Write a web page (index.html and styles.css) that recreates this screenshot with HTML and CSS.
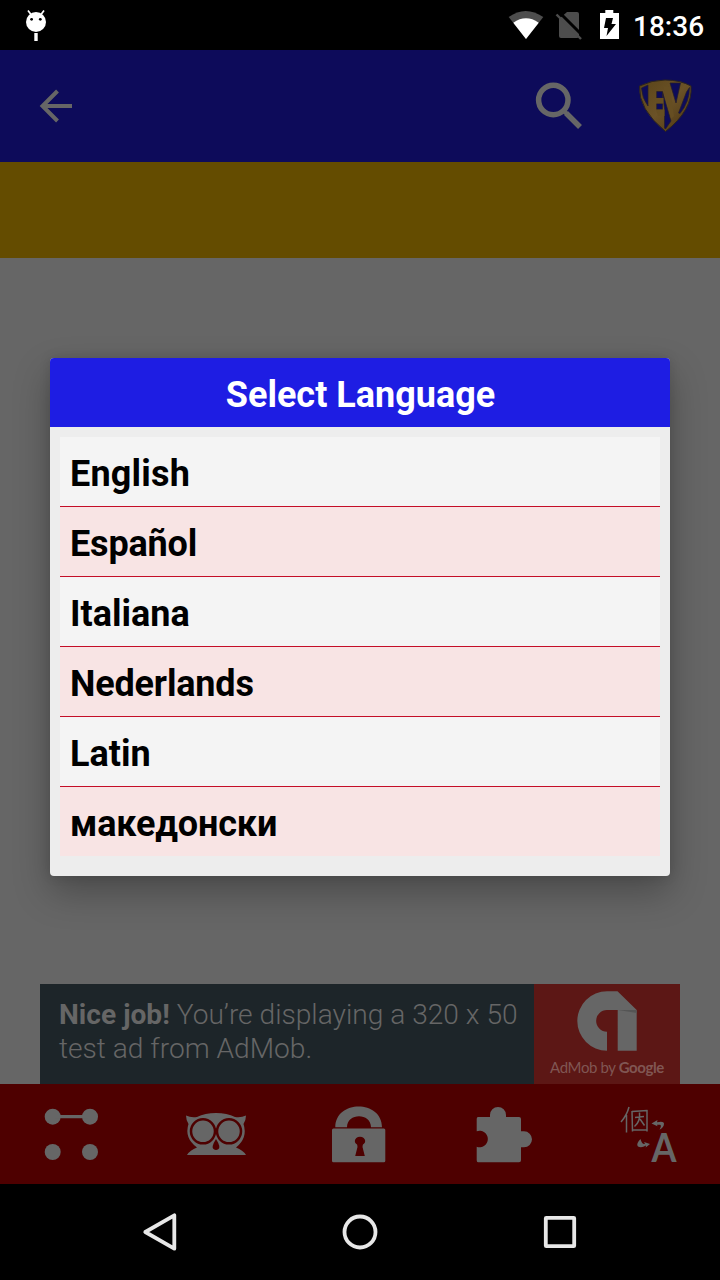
FILE: index.html
```html
<!DOCTYPE html>
<html lang="en">
<head>
<meta charset="utf-8">
<title>Select Language</title>
<link rel="stylesheet" href="styles.css">
</head>
<body>
<div class="screen">
  <header class="status">
    <svg class="debug" width="24" height="34" viewBox="24 8 24 34"><path d="M28 10.500l3 4M44 10.500l-3 4" stroke="#fff" stroke-width="1.700"/><circle cx="36" cy="22" r="10" fill="#fff"/><circle cx="31.600" cy="19.300" r="1.400"/><circle cx="40.300" cy="19.300" r="1.400"/><path d="M34.300 33h3.400v8h-3.400z" fill="#fff"/></svg>
    <svg class="signals" width="114" height="34" viewBox="508 8 114 34"><path d="M508.700 17Q525.500 5 543.300 17L526 39z" fill="#4d4d4d"/><path d="M513.300 22.700Q526 14 538.700 22.700L526 39z" fill="#fff"/><path d="M567 12h10q2 0 2 2v22q0 2-2 2h-16q-2 0-2-2V19z" fill="#4d4d4d"/><path d="M559 12l23.500 23.500" stroke="#000" stroke-width="3"/><path d="M556.500 14.500l24.500 24.500" stroke="#4d4d4d" stroke-width="2.400"/><path d="M600 13h5.300v-3h8v3h5.700v26h-19z" fill="#fff"/><path d="M606 18h7l-1.500 6h4.500l-9.500 12 1.500-8h-4z"/></svg>
    <span class="clock">18:36</span>
  </header>
  <nav class="toolbar">
    <svg width="34" height="34" viewBox="39 89 34 34" fill="none" stroke="#666" stroke-width="4"><path d="M72 106H43M57.500 91L42.500 106l15 15"/></svg>
    <div class="actions">
      <svg width="50" height="50" viewBox="534 80 50 50" fill="none" stroke="#666"><circle cx="553.300" cy="99" r="14.700" stroke-width="5.500"/><path d="M563.500 109.500l3 3" stroke-width="4"/><path d="M566 112l14 14" stroke-width="5.500"/></svg>
      <svg width="54" height="54" viewBox="638 79 54 54">
        <defs><linearGradient id="gold" x1="0" y1="0" x2="1" y2="1"><stop offset="0" stop-color="#5a4419"/><stop offset=".5" stop-color="#6b5227"/><stop offset="1" stop-color="#4b3510"/></linearGradient></defs>
        <path d="M639.500 86Q652 80 665 80Q680 80 691 86Q693 110 665.500 131.500Q638 109 639.500 86z" fill="url(#gold)" stroke="#2c241e" stroke-width="1"/>
        <g fill="#0d0b5a" stroke="#251e28" stroke-width=".7">
          <path d="M641.500 88L648 85V106Q642 98 641.500 88z"/>
          <path d="M656.700 91.500H662.500V98H656.700z"/>
          <path d="M656.700 103.500H662.500V109.500H656.700z"/>
          <path d="M662.500 92L671 121 665.500 129 664.500 128V109z"/>
          <path d="M670 83H680.500L676 103z"/>
          <path d="M689.500 87.500Q689.500 102 680 113.500L678.500 113 686.500 92z"/>
        </g>
        <path d="M656 109.500H664.500V116H658zM656 98H663.500V103.500H656zM663 86L670 87 674 116 671 119z" fill="#664e22"/>
      </svg>
    </div>
  </nav>
  <div class="band"></div>
  <main class="content">
    <section class="ad">
      <p class="ad-copy"><b>Nice job!</b> You’re displaying a 320 x 50<br><span>test ad from AdMob.</span></p>
      <div class="ad-brand">
        <svg width="60" height="60" viewBox="577 991 60 60"><path d="M607 991.300h10.500L636.700 1010v40.700h-19V1010H607a10.700 10.700 0 0 0 0 21.700v19a29.700 29.700 0 0 1 0-59.400z" fill="#666"/><path d="M618 1010h18l1 3z" fill="#555"/></svg>
        <div class="ad-name">AdMob by <b>Google</b></div>
      </div>
    </section>
  </main>
  <footer class="tabs">
    <svg width="56" height="54" viewBox="44 1107 56 54" fill="#666"><circle cx="52.700" cy="1116.700" r="8"/><circle cx="90" cy="1116.700" r="8"/><circle cx="52.700" cy="1152" r="8"/><circle cx="90" cy="1152" r="8"/><path d="M55 1115h33v3.300H55z"/></svg>
    <svg width="62" height="44" viewBox="185 1112 62 44"><path d="M186 1115.500Q191 1118 197 1117Q205 1113 216 1113Q227 1113 235 1117Q241 1118 246 1115.500Q246 1120 243.500 1124Q248 1138 236 1147.500Q243 1150 246 1155H187Q190 1150 197 1147.500Q184 1138 188.500 1124Q186 1120 186 1115.500z" fill="#666"/><g fill="#666" stroke="#4e0000" stroke-width="2.500"><circle cx="203" cy="1131.300" r="12"/><circle cx="229" cy="1131.300" r="12"/></g><path d="M216 1139Q211 1147 213.500 1149Q216 1151 218.500 1149Q221 1147 216 1139z" fill="#4e0000"/></svg>
    <svg width="56" height="58" viewBox="332 1105 56 58"><path d="M335.300 1127.300C335.300 1099.700 382 1099.700 382 1127.300H371C371 1112.700 347 1112.700 347 1127.300z" fill="#666"/><rect x="332" y="1128.500" width="53.300" height="33.700" rx="1.500" fill="#666"/><ellipse cx="360" cy="1141" rx="5.200" ry="4.300" fill="#4e0000"/><path d="M357 1143h6l-.5 4 2.300 9h-9.600l2.300-9z" fill="#4e0000"/></svg>
    <svg width="58" height="57" viewBox="475 1106 58 57"><path d="M478 1117h12v-2a8 8 0 0 1 16 0v2h13q2 0 2 2v12.300h3a8 8 0 0 1 0 16h-3v13q0 2-2 2h-41q-1.300 0-1.300-2v-13.500a8.300 8.300 0 1 0 0-15.600V1119q0-2 1.300-2z" fill="#666"/></svg>
    <svg class="translate" width="72" height="72" viewBox="612 1098 72 72" fill="none" stroke="#666"><path d="M629 1107q-2 8-8 15M626.500 1115v17.500M632 1111l.5 20.500M632 1111.500l15.500-1M647 1110v21.500M632.500 1130h14.500M635 1117.500l9-1M639.500 1112.500q1 9-5 14M640 1119l4.500 6.500" stroke-width="1.500"/><path d="M651.500 1123.500l6-3.500-.5 2.200q7-1.500 7 1.500 0 3.500-4.500 6 2.500-4.500.5-5h-3l.5 1.500zM650 1144l-6-2 1 1.800q-3 1-4.500-4.800-5 5-2.500 7.500 3.500 1.800 8-1l-.3 2z" fill="#666" stroke="none"/><text x="651.5" y="1161.500" textLength="25" lengthAdjust="spacingAndGlyphs">A</text></svg>
  </footer>
  <footer class="system">
    <svg width="440" height="44" viewBox="140 1210 440 44" fill="none" stroke="#e8e8e8" stroke-width="3.800" stroke-linejoin="round"><path d="M145.300 1232L174.300 1215.300v33.400z"/><circle cx="360" cy="1232" r="15.500"/><rect x="545.800" y="1217.800" width="28.400" height="28.400" rx=".5"/></svg>
  </footer>
  <section class="dialog">
    <h1>Select Language</h1>
    <ul class="languages">
      <li class="wide">English</li>
      <li class="tight">Español</li>
      <li>Italiana</li>
      <li class="tight">Nederlands</li>
      <li>Latin</li>
      <li class="tight">македонски</li>
    </ul>
  </section>
</div>
</body>
</html>
```
FILE: styles.css
```css
* { box-sizing: border-box; }
body { margin: 0; font-family: Roboto, "Noto Sans", sans-serif; }
svg { display: block; flex: none; overflow: visible; }
.screen { position: relative; width: 720px; height: 1280px; display: flex; flex-direction: column; overflow: hidden; background: #666; }
.status { height: 50px; background: #000; color: #fff; display: flex; align-items: center; padding: 0 16px 0 24px; }
.signals { margin-left: auto; }
.clock { width: 71px; margin-left: 11px; font-size: 28px; font-weight: 500; line-height: 34px; white-space: nowrap; padding-top: 3px; }
.toolbar { height: 112px; background: #0d0b5a; display: flex; align-items: center; justify-content: space-between; padding: 0 28px 0 39px; }
.actions { display: flex; align-items: center; gap: 54px; }
.band { height: 96px; background: #644c00; }
.content { flex: 1; display: flex; align-items: flex-end; justify-content: center; }
.ad { width: 640px; height: 100px; display: flex; background: #1d2529; color: #666; }
.ad-copy { width: 494px; margin: 0; padding: 14px 0 0 19px; font-size: 28.150px; line-height: 33.500px; font-weight: 300; white-space: nowrap; }
.ad-copy b { font-weight: 700; }
.ad-brand { flex: 1; background: #5c1715; display: flex; flex-direction: column; align-items: center; padding-top: 7px; }
.ad-name { font: 15px/18px Lato, sans-serif; letter-spacing: -.4px; margin-top: 7px; color: #805653; white-space: nowrap; }
.ad-name b { font-weight: 700; }
.tabs { height: 100px; background: #4e0000; display: grid; grid-template-columns: repeat(5, 144px); align-items: center; justify-items: center; }
.translate text { font: 700 40px Lato, sans-serif; fill: #666; stroke: none; }
.system { height: 96px; background: #000; display: flex; align-items: center; justify-content: center; }
.dialog { position: absolute; left: 50px; top: 358px; width: 620px; height: 518px; background: #ededed; border-radius: 4px; overflow: hidden; box-shadow: 0 16px 36px rgba(0,0,0,.28), 0 0 12px rgba(0,0,0,.12); }
.dialog h1 { margin: 0; height: 69px; padding-left: 1px; background: #1e1de3; color: #fff; text-align: center; font-size: 36px; line-height: 75px; font-weight: 700; }
.languages { list-style: none; margin: 10px 10px 0; padding: 0; color: #000; font-size: 36px; font-weight: 700; line-height: 75px; }
.languages li { height: 70px; padding-left: 10px; background: #f4f4f4; border-bottom: 1px solid #c40d27; }
.languages li:nth-child(even) { background: #f8e4e4; }
.languages li:last-child { height: 69px; border-bottom: 0; }
.languages .wide { letter-spacing: .2px; }
.languages .tight { letter-spacing: -.17px; }
```
